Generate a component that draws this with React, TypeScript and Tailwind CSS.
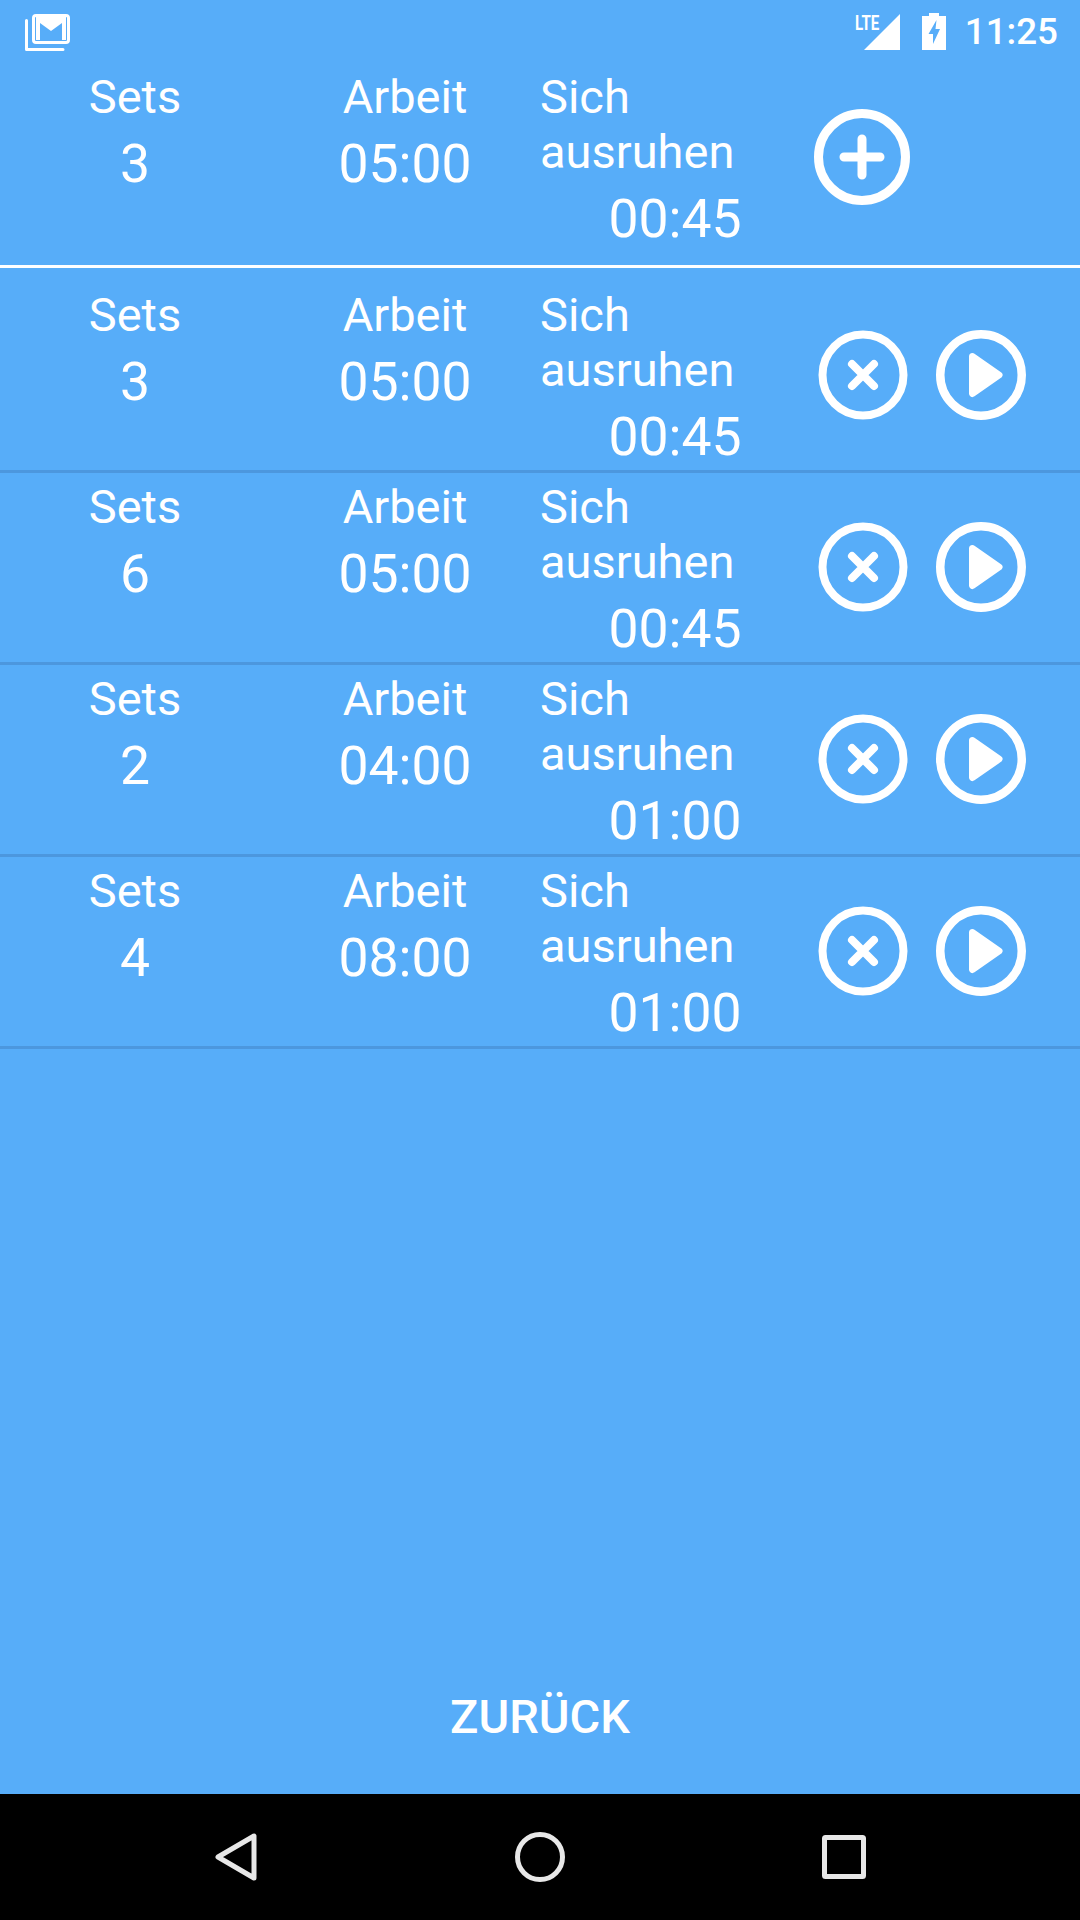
const font = { fontFamily: "Roboto, sans-serif" };

type Workout = { sets: number; work: string; rest: string };

const workouts: Workout[] = [
  { sets: 3, work: "05:00", rest: "00:45" },
  { sets: 6, work: "05:00", rest: "00:45" },
  { sets: 2, work: "04:00", rest: "01:00" },
  { sets: 4, work: "08:00", rest: "01:00" },
];

function StatusBar() {
  return (
    <div className="h-[63px] flex items-center pl-[25px] pr-[22px] text-white">
      <svg width="45" height="37" viewBox="0 0 45 37" className="mb-[-1px]">
        <path d="M1.5 6.5V35.5H38" fill="none" stroke="white" strokeWidth="3" strokeLinecap="round" strokeLinejoin="round" />
        <rect x="8.5" y="1.5" width="35" height="27" rx="2.5" fill="none" stroke="white" strokeWidth="3" />
        <path d="M11 3H41V26H37V9L26 17L15 9V26H11Z" fill="white" />
      </svg>
      <div className="ml-auto flex items-center">
        <span className="w-[24px] h-[38px] text-[21px] leading-[21px] font-bold scale-x-[0.72] origin-left whitespace-nowrap mr-[-15px]">LTE</span>
        <svg width="36" height="36" viewBox="0 0 36 36">
          <path d="M36 0V36H0Z" fill="white" />
        </svg>
        <svg width="24" height="37" viewBox="0 0 24 37" className="ml-[22px]">
          <path d="M7 0H17V3H24V37H0V3H7Z" fill="white" />
          <path d="M14.5 7L6.5 21H11V31L18 16H13.5Z" fill="#57adf9" />
        </svg>
        <span className="ml-[19px] text-[36.75px] leading-[43px] font-medium" style={font}>11:25</span>
      </div>
    </div>
  );
}

function PlusIcon() {
  return (
    <svg width="96" height="96" viewBox="0 0 96 96" fill="none" stroke="white">
      <circle cx="48" cy="48" r="43.5" strokeWidth="9" />
      <path d="M48 30V66M30 48H66" strokeWidth="9" strokeLinecap="round" />
    </svg>
  );
}

function DeleteIcon() {
  return (
    <svg width="90" height="90" viewBox="0 0 90 90" fill="none" stroke="white">
      <circle cx="45" cy="45" r="40.5" strokeWidth="8" />
      <path d="M34 34L56 56M56 34L34 56" strokeWidth="8" strokeLinecap="round" />
    </svg>
  );
}

function PlayIcon() {
  return (
    <svg width="90" height="90" viewBox="0 0 90 90" fill="none" stroke="white">
      <circle cx="45" cy="45" r="40.75" strokeWidth="8.5" />
      <path d="M36.5 26.5L63 45L36.5 63.5Z" fill="white" strokeWidth="7" strokeLinejoin="round" />
    </svg>
  );
}

function Columns({ sets, work, rest }: Workout) {
  return (
    <>
      <div className="w-[270px] shrink-0 flex flex-col items-center">
        <div className="text-[47px] leading-[55px]">Sets</div>
        <div className="mt-[9px] text-[53.5px] leading-[61px]">{sets}</div>
      </div>
      <div className="w-[270px] shrink-0 flex flex-col items-center">
        <div className="text-[47px] leading-[55px]">Arbeit</div>
        <div className="mt-[9px] text-[53.5px] leading-[61px]">{work}</div>
      </div>
      <div className="w-[270px] shrink-0">
        <div className="w-[208px] text-[47px] leading-[55px]">Sich ausruhen</div>
        <div className="mt-[9px] text-[53.5px] leading-[61px] text-center">{rest}</div>
      </div>
    </>
  );
}

function WorkoutRow(w: Workout) {
  return (
    <div className="h-[192px] pt-[6px] flex border-b-[3px] border-[#4c97de]">
      <Columns {...w} />
      <div className="flex-1 flex items-center pl-[8px] gap-[28px] pb-[7px]">
        <DeleteIcon />
        <PlayIcon />
      </div>
    </div>
  );
}

export default function App() {
  return (
    <div className="w-[1080px] h-[1920px] flex flex-col bg-[#57adf9] text-white" style={font}>
      <StatusBar />
      <div className="h-[205px] pt-[6px] flex border-b-[3px] border-white">
        <Columns sets={3} work="05:00" rest="00:45" />
        <div className="flex-1 flex items-start pl-[4px] pt-[40px]">
          <PlusIcon />
        </div>
      </div>
      <div className="pt-[13px]">
        {workouts.map((w, i) => (
          <WorkoutRow key={i} {...w} />
        ))}
      </div>
      <div className="flex-1 flex items-end justify-center pb-[51px]">
        <span className="text-[47px] leading-[52px] font-medium">ZURÜCK</span>
      </div>
      <div className="h-[126px] bg-black flex items-center justify-between pl-[215px] pr-[214px]">
        <svg width="42" height="48" viewBox="0 0 42 48" fill="none" stroke="#e8e8e8" strokeWidth="5" strokeLinejoin="round">
          <path d="M39 3V45L3 24Z" />
        </svg>
        <svg width="50" height="50" viewBox="0 0 50 50" fill="none" stroke="#e8e8e8" strokeWidth="5">
          <circle cx="25" cy="25" r="22.5" />
        </svg>
        <svg width="44" height="44" viewBox="0 0 44 44" fill="none" stroke="#e8e8e8" strokeWidth="5" strokeLinejoin="round">
          <rect x="2.5" y="2.5" width="39" height="39" rx="1" />
        </svg>
      </div>
    </div>
  );
}
